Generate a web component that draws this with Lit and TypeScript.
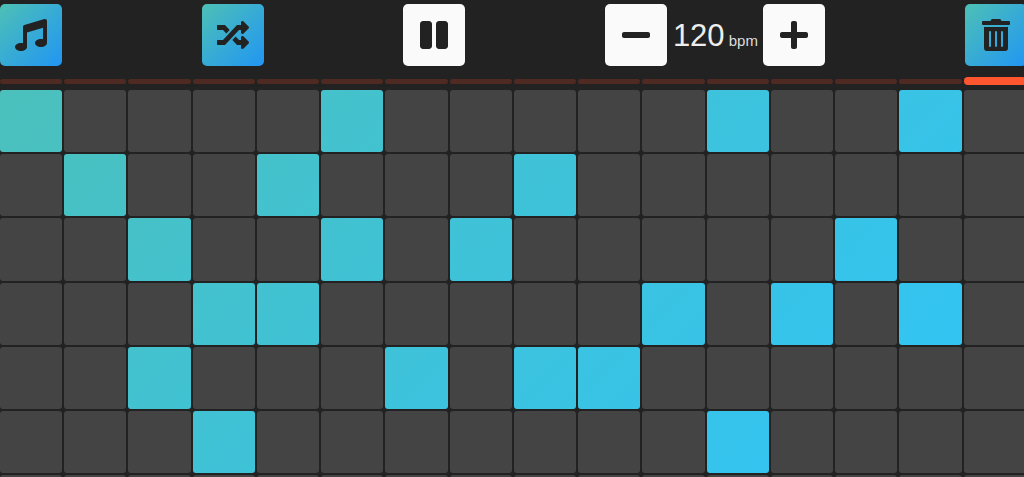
import { LitElement, html, css, svg } from 'lit';
import { customElement, state } from 'lit/decorators.js';

const STEPS = 16;

// rows of the sequencer, listed as the active column indexes
const PATTERN: number[][] = [
  [0, 5, 11, 14],
  [1, 4, 8],
  [2, 5, 7, 13],
  [3, 4, 10, 12, 14],
  [2, 6, 8, 9],
  [3, 11],
  [],
];

const icons = {
  music: svg`<path d="M511.99 32.01c0-21.71-21.1-37.01-41.6-30.51L150.4 96c-13.3 4.2-22.4 16.5-22.4 30.5v261.42c-10.05-2.38-20.72-3.92-32-3.92-53.02 0-96 28.65-96 64s42.98 64 96 64 96-28.65 96-64V214.31l256-75.02v184.63c-10.05-2.38-20.72-3.92-32-3.92-53.02 0-96 28.65-96 64s42.98 64 96 64 96-28.65 96-64l-.01-351.99z"/>`,
  shuffle: svg`<path d="M504.971 359.029c9.373 9.373 9.373 24.569 0 33.941l-80 79.984c-15.01 15.01-40.971 4.49-40.971-16.971V416h-58.785a12.004 12.004 0 0 1-8.773-3.812l-70.556-75.596 53.333-57.143L352 336h32v-39.981c0-21.438 25.943-31.998 40.971-16.971l80 79.981zM12 176h84l52.781 56.551 53.333-57.143-70.556-75.596A11.999 11.999 0 0 0 122.785 96H12c-6.627 0-12 5.373-12 12v56c0 6.627 5.373 12 12 12zm372 0v39.984c0 21.46 25.961 31.98 40.971 16.971l80-79.984c9.373-9.373 9.373-24.569 0-33.941l-80-79.981C409.943 24.021 384 34.582 384 56.019V96h-58.785a12.004 12.004 0 0 0-8.773 3.812L96 336H12c-6.627 0-12 5.373-12 12v56c0 6.627 5.373 12 12 12h110.785c3.326 0 6.503-1.381 8.773-3.812L352 176h32z"/>`,
  pause: svg`<g transform="translate(32 0)"><path d="M144 479H48c-26.500 0-48-21.500-48-48V79c0-26.500 21.500-48 48-48h96c26.500 0 48 21.500 48 48v352c0 26.500-21.500 48-48 48zm304-48V79c0-26.500-21.500-48-48-48h-96c-26.500 0-48 21.500-48 48v352c0 26.500 21.500 48 48 48h96c26.500 0 48-21.500 48-48z"/></g>`,
  minus: svg`<g transform="translate(32 0)"><path d="M416 208H32c-17.670 0-32 14.330-32 32v32c0 17.670 14.330 32 32 32h384c17.670 0 32-14.330 32-32v-32c0-17.670-14.330-32-32-32z"/></g>`,
  plus: svg`<g transform="translate(32 0)"><path d="M416 208H272V64c0-17.670-14.330-32-32-32h-32c-17.670 0-32 14.330-32 32v144H32c-17.670 0-32 14.330-32 32v32c0 17.670 14.330 32 32 32h144v144c0 17.670 14.330 32 32 32h32c17.670 0 32-14.330 32-32V304h144c17.670 0 32-14.330 32-32v-32c0-17.670-14.330-32-32-32z"/></g>`,
  trash: svg`<g transform="translate(32 0)"><path d="M32 464a48 48 0 0 0 48 48h288a48 48 0 0 0 48-48V128H32zm272-256a16 16 0 0 1 32 0v224a16 16 0 0 1-32 0zm-96 0a16 16 0 0 1 32 0v224a16 16 0 0 1-32 0zm-96 0a16 16 0 0 1 32 0v224a16 16 0 0 1-32 0zM432 32H312l-9.400-18.700A24 24 0 0 0 281.100 0H166.800a23.720 23.720 0 0 0-21.400 13.300L136 32H16A16 16 0 0 0 0 48v32a16 16 0 0 0 16 16h416a16 16 0 0 0 16-16V48a16 16 0 0 0-16-16z"/></g>`,
};

@customElement('app-root')
export class AppRoot extends LitElement {
  @state() bpm = 120;
  @state() current = 15;

  static styles = css`
    :host {
      display: block;
      height: 477px;
      overflow: hidden;
      background: #222;
      font-family: 'Liberation Sans', Arial, sans-serif;
    }

    .page {
      width: 1026.6px;
    }

    .toolbar {
      display: flex;
      justify-content: space-between;
      padding-top: 4px;
    }

    .btn {
      width: 62px;
      height: 62px;
      padding: 0;
      border: none;
      border-radius: 5px;
      display: flex;
      align-items: center;
      justify-content: center;
      color: #222;
      background: #fafafa;
    }

    .btn.accent {
      background: linear-gradient(135deg, #4dc0b6, #2196f3);
    }

    .btn svg {
      width: 32px;
      height: 32px;
      fill: currentColor;
    }

    .tempo {
      display: flex;
      align-items: center;
    }

    .readout {
      box-sizing: border-box;
      width: 96px;
      padding: 2px 0 0 1px;
      text-align: center;
      color: #eee;
      font-size: 31px;
      white-space: nowrap;
    }

    .readout small {
      font-size: 15px;
      color: #ddd;
    }

    .steps,
    .grid {
      display: grid;
      grid-template-columns: repeat(16, 62.24px);
      column-gap: 2px;
    }

    .steps {
      align-items: center;
      height: 8px;
      margin-top: 11px;
    }

    .grid {
      row-gap: 2px;
      margin-top: 5px;
    }

    .led {
      height: 5px;
      border-radius: 2.5px;
      background: #4e2a23;
    }

    .led.on {
      height: 7.5px;
      border-radius: 3.75px;
      background: #ff5630;
    }

    .cell {
      aspect-ratio: 1;
      border-radius: 3px;
      background: #444;
    }

    .cell.on {
      background: linear-gradient(135deg, #4dc0b8, #2fc5fb) fixed;
    }
  `;

  private btn(icon: keyof typeof icons, accent = false) {
    return html`<button class="btn ${accent ? 'accent' : ''}" aria-label=${icon}>
      <svg viewBox="0 0 512 512">${icons[icon]}</svg>
    </button>`;
  }

  render() {
    const cols = Array.from({ length: STEPS }, (_, i) => i);
    return html`
      <div class="page">
        <div class="toolbar">
          ${this.btn('music', true)}
          ${this.btn('shuffle', true)}
          ${this.btn('pause')}
          <div class="tempo">
            ${this.btn('minus')}
            <span class="readout">${this.bpm}<small> bpm</small></span>
            ${this.btn('plus')}
          </div>
          ${this.btn('trash', true)}
        </div>
        <div class="steps">
          ${cols.map((i) => html`<div class="led ${i === this.current ? 'on' : ''}"></div>`)}
        </div>
        <div class="grid">
          ${PATTERN.map((row) =>
            cols.map((i) => html`<div class="cell ${row.includes(i) ? 'on' : ''}"></div>`)
          )}
        </div>
      </div>
    `;
  }
}

declare global {
  interface HTMLElementTagNameMap {
    'app-root': AppRoot;
  }
}
